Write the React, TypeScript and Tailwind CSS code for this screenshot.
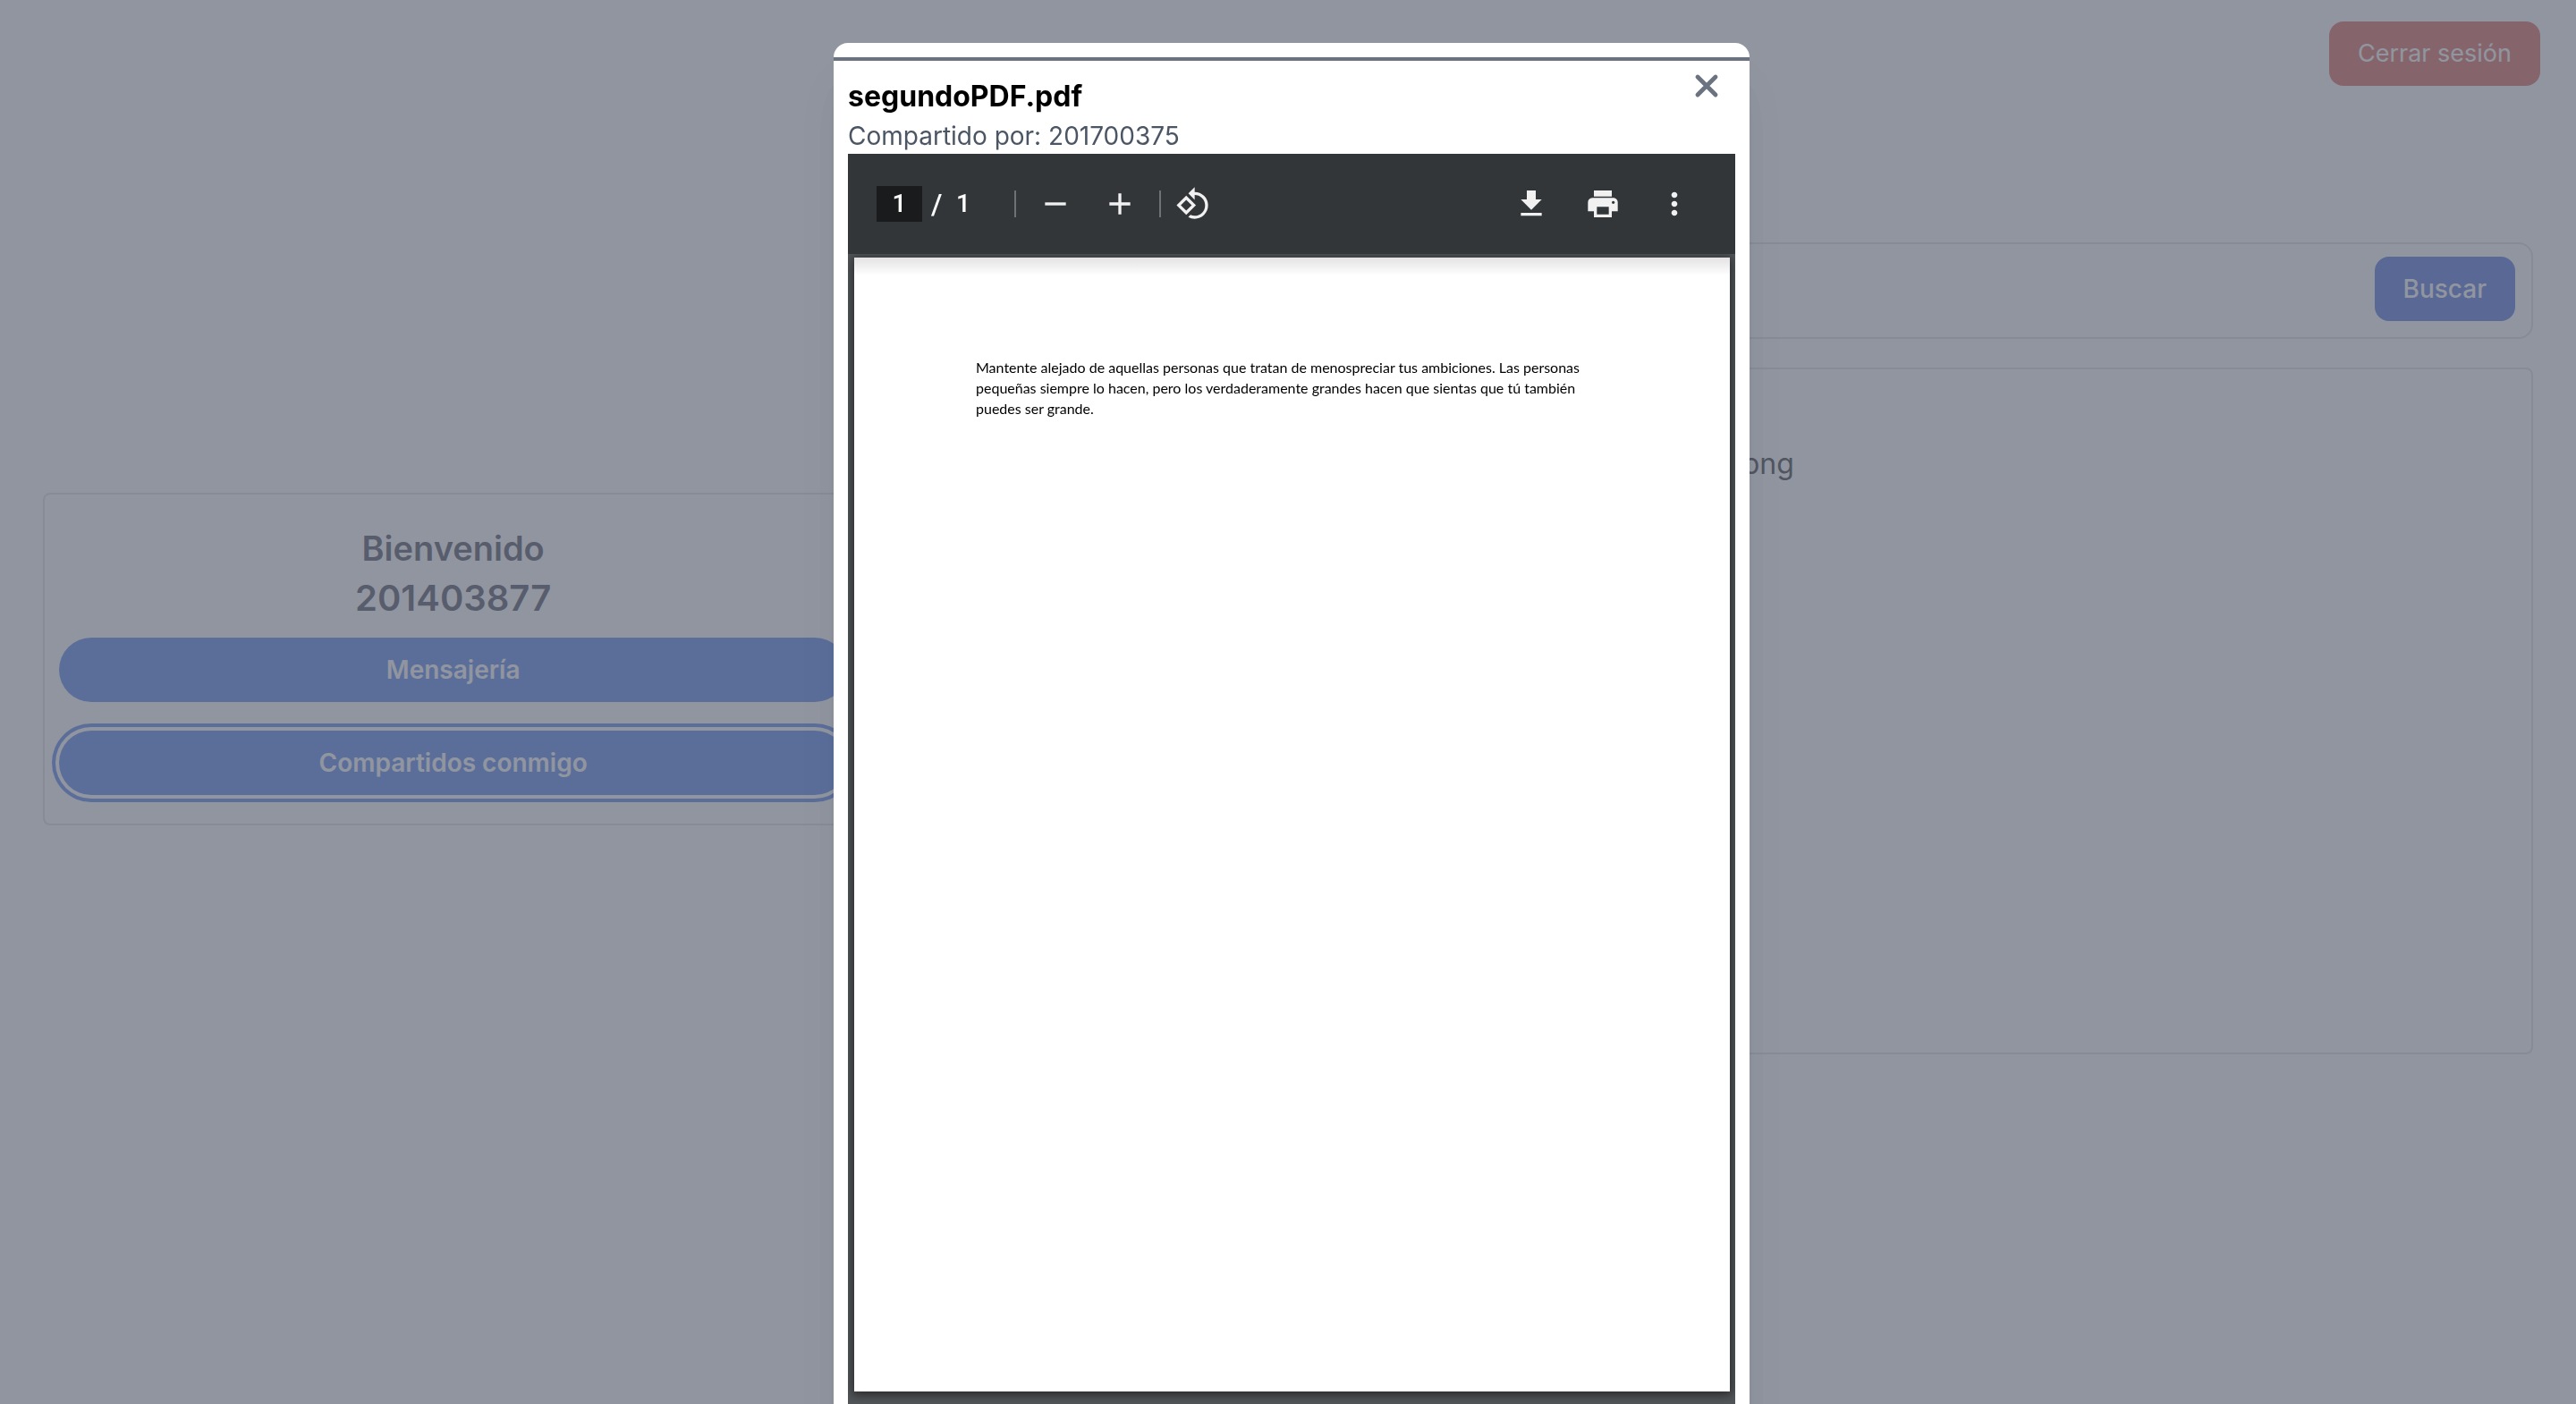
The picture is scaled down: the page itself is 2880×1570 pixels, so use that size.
import type { ReactNode } from "react";

function Icon({ d }: { d: string }) {
  return (
    <svg viewBox="0 0 24 24" className="size-10 fill-current" aria-hidden="true">
      <path d={d} />
    </svg>
  );
}

function ToolButton({ label, children }: { label: string; children: ReactNode }) {
  return (
    <button type="button" aria-label={label} className="flex size-16 items-center justify-center">
      {children}
    </button>
  );
}

function Divider() {
  return <span className="h-[30px] w-0.5 bg-[#6f7274]" />;
}

function Header() {
  return (
    <header className="flex justify-end px-10 py-6">
      <button type="button" className="rounded-2xl bg-[#d4422c] px-8 py-4 text-[27px] leading-10 text-white">
        Cerrar sesión
      </button>
    </header>
  );
}

function WelcomePanel() {
  return (
    <section className="flex flex-col rounded-lg border-2 border-[#dbd8d4] px-4 py-8">
      <h1 className="text-center leading-14 font-semibold text-[#1f2330]">
        <span className="block text-[38px]">Bienvenido</span>
        <span className="block text-[40px]">201403877</span>
      </h1>
      <div className="mt-4 flex flex-col gap-8">
        <button type="button" className="rounded-full bg-[#2f66e8] py-4 text-[28px] leading-10 font-semibold text-white">
          Mensajería
        </button>
        <button
          type="button"
          className="rounded-full bg-[#2f66e8] py-4 text-[28px] leading-10 font-semibold text-white ring-4 ring-[#2f66e8] ring-offset-4"
        >
          Compartidos conmigo
        </button>
      </div>
    </section>
  );
}

function FilesPanel() {
  return (
    <div className="flex flex-col gap-8 pb-6">
      <form className="flex rounded-2xl border-2 border-[#dbd8d4] px-[18px] pt-3.5 pb-[18px]">
        <input type="search" aria-label="Buscar archivo" className="min-w-0 flex-1 text-[28px] outline-none" />
        <button type="button" className="rounded-2xl bg-[#274ed0] px-8 py-4 text-[28px] leading-10 font-medium text-white">
          Buscar
        </button>
      </form>
      <section className="min-h-192 rounded-lg border-2 border-[#dbd8d4] pt-[82px] pl-1">
        <p className="text-center text-[32px] leading-12 text-black">imagen.png</p>
      </section>
    </div>
  );
}

function PdfToolbar() {
  return (
    <div className="flex h-28 items-center justify-between bg-[#323639] pr-9 pl-8 text-[#f1f1f1]">
      <div className="flex items-center">
        <input
          aria-label="Página"
          defaultValue="1"
          className="h-10 w-[51px] bg-[#191b1c] text-center font-[Roboto,sans-serif] text-[28px] font-medium text-white"
        />
        <span className="ml-2.5 w-3 font-[Roboto,sans-serif] text-[32px] font-medium text-white">/</span>
        <span className="ml-4 w-[65px] font-[Roboto,sans-serif] text-[28px] font-medium text-white">1</span>
        <Divider />
        <div className="mx-3 flex gap-2">
          <ToolButton label="Reducir">
            <Icon d="M19 13H5v-2h14v2z" />
          </ToolButton>
          <ToolButton label="Ampliar">
            <Icon d="M19 13h-6v6h-2v-6H5v-2h6V5h2v6h6v2z" />
          </ToolButton>
        </div>
        <Divider />
        <div className="ml-1">
          <ToolButton label="Girar">
            <Icon d="M7.34 6.41L.86 12.9l6.49 6.48 6.49-6.48-6.5-6.49zM3.69 12.9l3.66-3.66L11 12.9l-3.66 3.66-3.65-3.66zm15.67-6.26C17.61 4.88 15.3 4 13 4V.76L8.76 5 13 9.24V6c1.79 0 3.58.68 4.95 2.05 2.73 2.73 2.73 7.17 0 9.9C16.58 19.32 14.79 20 13 20c-.97 0-1.94-.21-2.84-.61l-1.49 1.49C10.02 21.62 11.51 22 13 22c2.3 0 4.61-.88 6.36-2.64 3.52-3.51 3.52-9.21 0-12.72z" />
          </ToolButton>
        </div>
      </div>
      <div className="flex gap-4">
        <ToolButton label="Descargar">
          <Icon d="M19 9h-4V3H9v6H5l7 7 7-7zM5 18v2h14v-2H5z" />
        </ToolButton>
        <ToolButton label="Imprimir">
          <Icon d="M19 8H5c-1.66 0-3 1.34-3 3v6h4v4h12v-4h4v-6c0-1.66-1.34-3-3-3zm-3 11H8v-5h8v5zm3-7c-.55 0-1-.45-1-1s.45-1 1-1 1 .45 1 1-.45 1-1 1zm-1-9H6v4h12V3z" />
        </ToolButton>
        <ToolButton label="Más opciones">
          <Icon d="M12 8c1.1 0 2-.9 2-2s-.9-2-2-2-2 .9-2 2 .9 2 2 2zm0 2c-1.1 0-2 .9-2 2s.9 2 2 2 2-.9 2-2-.9-2-2-2zm0 6c-1.1 0-2 .9-2 2s.9 2 2 2 2-.9 2-2-.9-2-2-2z" />
        </ToolButton>
      </div>
    </div>
  );
}

function PdfViewer() {
  return (
    <div className="bg-[#525659]">
      <PdfToolbar />
      <div className="overflow-hidden pt-1 pr-1.5 pb-16 pl-[7px]">
        <article className="min-h-[1268px] bg-white bg-linear-to-b from-[#e4e2e3] to-white to-[20px] px-34 pt-[111px] font-[Lato,sans-serif] text-[16px] leading-[23px] text-black shadow-[0_2px_10px_2px_#2a2a2a]">
          <p>
            Mantente alejado de aquellas personas que tratan de menospreciar tus ambiciones. Las personas
            <br />
            pequeñas siempre lo hacen, pero los verdaderamente grandes hacen que sientas que tú también
            <br />
            puedes ser grande.
          </p>
        </article>
      </div>
    </div>
  );
}

function PdfDialog() {
  return (
    <div className="fixed inset-0 flex items-start justify-center overflow-hidden bg-[#6b7280]/75 pt-12 pl-2">
      <div
        role="dialog"
        aria-label="segundoPDF.pdf"
        className="w-full max-w-5xl rounded-2xl bg-white pt-4 shadow-[0_40px_50px_-10px_rgba(0,0,0,0.1),0_20px_20px_-10px_rgba(0,0,0,0.04)]"
      >
        <div className="border-t-4 border-[#6b7280] px-4 pt-4 pb-4">
          <div className="flex items-start justify-between">
            <div>
              <h2 className="text-[32px] leading-12 font-bold text-black">segundoPDF.pdf</h2>
              <p className="text-[28px] leading-10 text-[#4b5563]">Compartido por: 201700375</p>
            </div>
            <button type="button" aria-label="Cerrar" className="-mt-2 mr-3 text-[#6b7280]">
              <svg viewBox="0 0 20 20" className="size-10" fill="none" stroke="currentColor" strokeWidth="2.4" strokeLinecap="round">
                <path d="M5 5L15 15M15 5L5 15" />
              </svg>
            </button>
          </div>
          <PdfViewer />
        </div>
      </div>
    </div>
  );
}

export default function App() {
  return (
    <div className="min-h-screen bg-white font-[Inter,sans-serif]">
      <Header />
      <main className="grid grid-cols-[1fr_2fr] items-center gap-8 px-12 pt-[151px]">
        <WelcomePanel />
        <FilesPanel />
      </main>
      <PdfDialog />
    </div>
  );
}
